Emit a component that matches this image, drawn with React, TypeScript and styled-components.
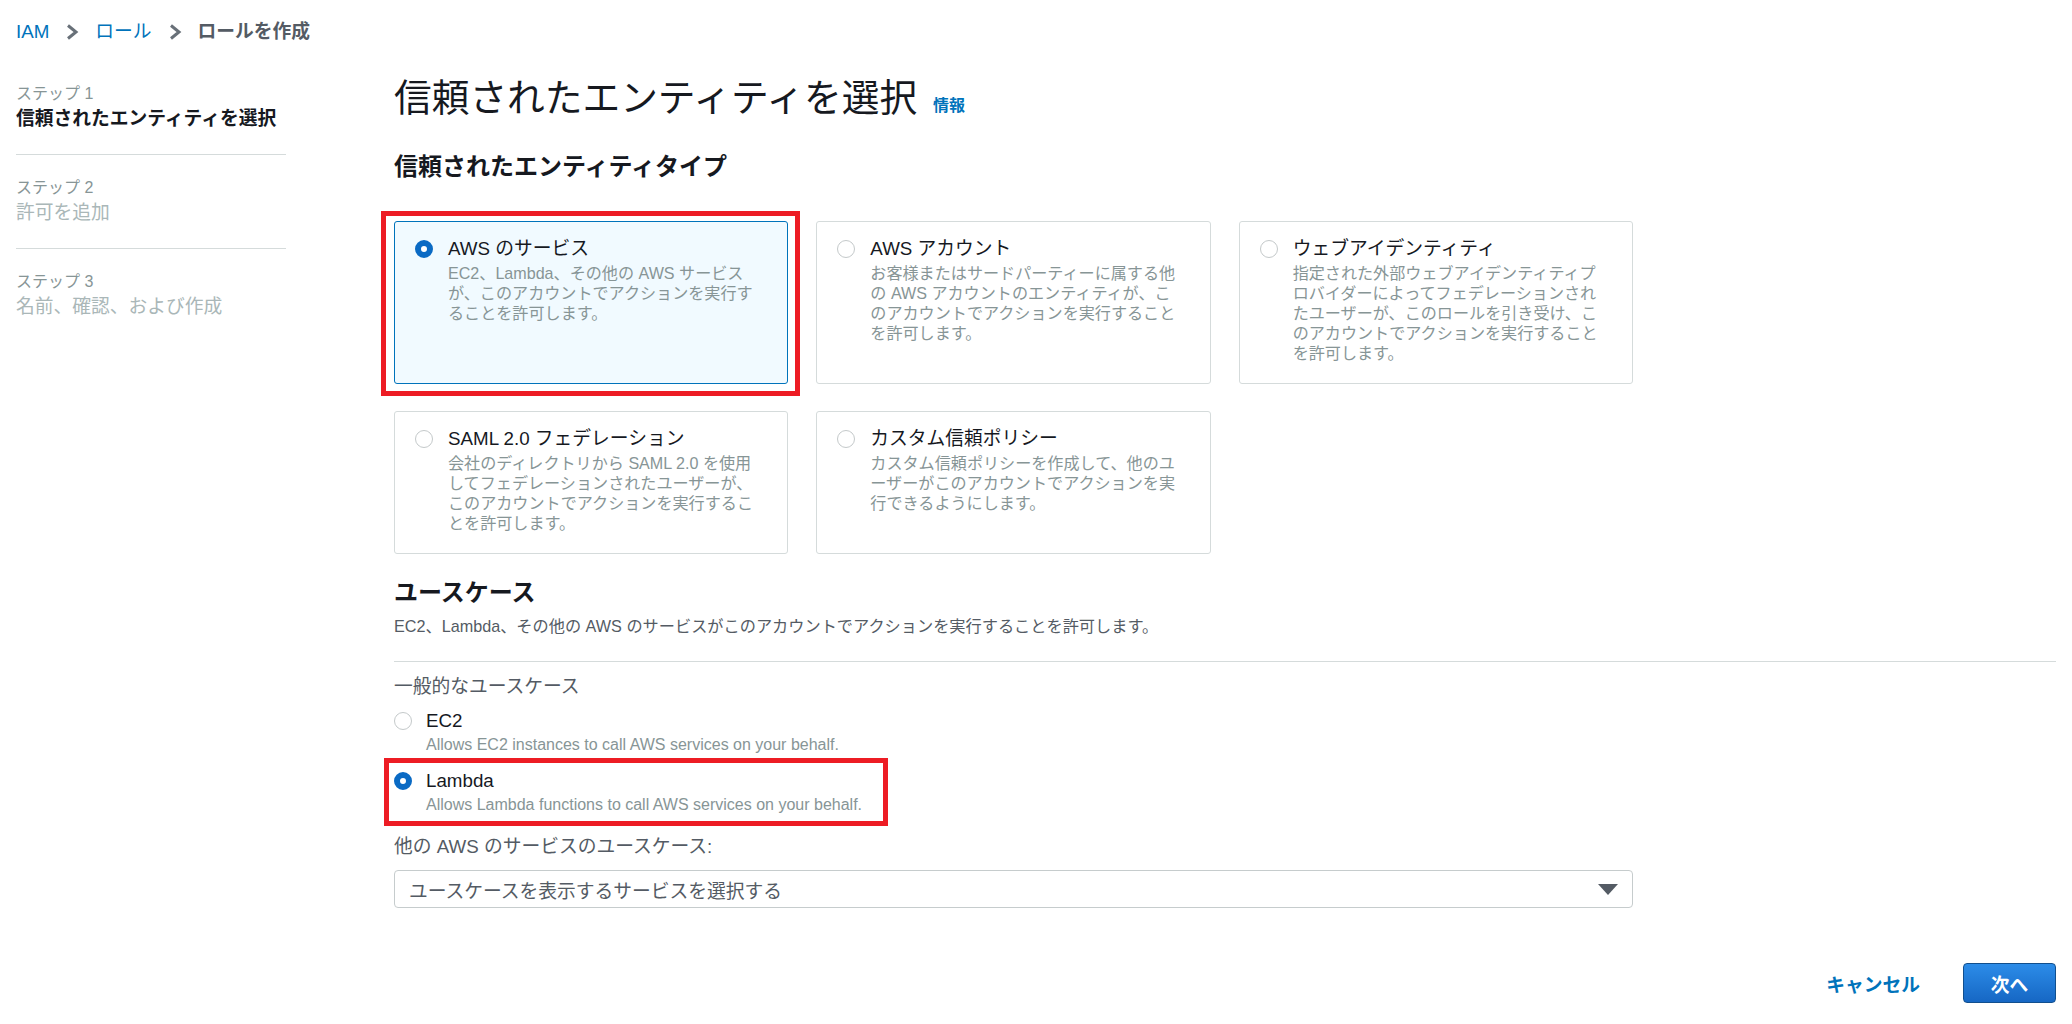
import styled, { createGlobalStyle } from 'styled-components';
import { useState } from 'react';

const GlobalStyle = createGlobalStyle`
  body {
    margin: 0;
    background: #ffffff;
    font-family: 'Liberation Sans', 'Noto Sans CJK JP', sans-serif;
    color: #16191f;
  }
`;

const Page = styled.div`
  padding: 0 16px;
`;

const Breadcrumbs = styled.nav`
  display: flex;
  align-items: center;
  gap: 16px;
  padding-top: 20px;
  height: 24px;
  font-size: 18.75px;
  line-height: 24px;
`;

const Crumb = styled.a<{ current?: boolean }>`
  color: ${props => (props.current ? '#545b64' : '#0073bb')};
  font-weight: ${props => (props.current ? 700 : 400)};
  text-decoration: none;
`;

const Layout = styled.div`
  display: flex;
  align-items: flex-start;
`;

const Sidebar = styled.ol`
  list-style: none;
  margin: 0;
  padding: 39px 0 0;
  width: 270px;
  flex-shrink: 0;
`;

const Step = styled.li`
  padding-bottom: 21px;

  & + & {
    border-top: 1px solid #d5dbdb;
    padding-top: 22px;
  }
`;

const StepLabel = styled.div`
  font-size: 16px;
  line-height: 22px;
  color: #879596;
`;

const StepTitle = styled.div<{ active?: boolean }>`
  font-size: 18.75px;
  line-height: 28px;
  font-weight: ${props => (props.active ? 700 : 400)};
  color: ${props => (props.active ? '#16191f' : '#aab7b8')};
`;

const Main = styled.main`
  flex: 1;
  margin-left: 108px;
  padding-top: 32px;
`;

const TitleRow = styled.div`
  display: flex;
  align-items: baseline;
  gap: 16px;
`;

const PageTitle = styled.h1`
  margin: 0;
  font-size: 37.7px;
  line-height: 44px;
  font-weight: 400;
  color: #16191f;
`;

const InfoLink = styled.a`
  font-size: 16px;
  font-weight: 700;
  color: #0073bb;
  text-decoration: none;
`;

const SectionTitle = styled.h2<{ gap: number }>`
  margin: ${props => props.gap}px 0 0;
  font-size: 24px;
  line-height: 32px;
  font-weight: 700;
  color: #16191f;
`;

const CardGrid = styled.div`
  display: grid;
  grid-template-columns: repeat(3, 1fr);
  column-gap: 28px;
  row-gap: 27px;
  width: 1239px;
  margin-top: 38px;
`;

const Card = styled.label<{ selected?: boolean }>`
  position: relative;
  display: flex;
  gap: 15px;
  padding: 15px 16px 20px 20px;
  border: 1px solid ${props => (props.selected ? '#0073bb' : '#d5dbdb')};
  border-radius: 3px;
  background: ${props => (props.selected ? '#f1faff' : '#ffffff')};
  cursor: pointer;
`;

const Radio = styled.span<{ checked?: boolean }>`
  box-sizing: border-box;
  flex-shrink: 0;
  width: 18px;
  height: 18px;
  margin-top: 3px;
  border-radius: 50%;
  background: #ffffff;
  border: ${props => (props.checked ? '6px solid #0a6ac4' : '1.5px solid #c4c9ca')};
`;

const OptionText = styled.div`
  display: flex;
  flex-direction: column;
`;

const CardTitle = styled.div`
  font-size: 18.75px;
  line-height: 24px;
  color: #16191f;
`;

const CardDesc = styled.div`
  margin-top: 2px;
  font-size: 16.1px;
  line-height: 20px;
  color: #879596;
  white-space: pre-line;
`;

const Highlight = styled.span<{ top: number; left: number; right?: number; bottom: number; width?: number }>`
  box-sizing: border-box;
  position: absolute;
  top: ${props => -props.top}px;
  left: ${props => -props.left}px;
  bottom: ${props => -props.bottom}px;
  ${props => (props.width ? `width: ${props.width}px;` : `right: ${-(props.right ?? 0)}px;`)}
  border: 5px solid #ed1c24;
  pointer-events: none;
`;

const Lead = styled.p`
  margin: 6px 0 0;
  font-size: 16.2px;
  line-height: 22px;
  color: #545b64;
`;

const Divider = styled.hr`
  margin: 24px 0 0;
  border: none;
  border-top: 1px solid #d5dbdb;
`;

const FieldLabel = styled.div<{ gap: number }>`
  margin-top: ${props => props.gap}px;
  font-size: 18.75px;
  line-height: 26px;
  color: #545b64;
`;

const OptionList = styled.div`
  display: flex;
  flex-direction: column;
  gap: 12px;
  margin-top: 8px;
`;

const Option = styled.label`
  position: relative;
  display: flex;
  gap: 14px;
  cursor: pointer;

  ${Radio} {
    margin-top: 4px;
  }
`;

const OptionTitle = styled.div`
  font-size: 18.75px;
  line-height: 26px;
  color: #16191f;
`;

const OptionDesc = styled.div`
  font-size: 16px;
  line-height: 22px;
  color: #879596;
`;

const Select = styled.div`
  box-sizing: border-box;
  display: flex;
  align-items: center;
  justify-content: space-between;
  width: 1239px;
  height: 38px;
  margin-top: 10px;
  padding: 0 14px;
  border: 1px solid #c6cccd;
  border-radius: 4px;
  font-size: 18.75px;
  color: #545b64;
`;

const Footer = styled.div`
  display: flex;
  justify-content: flex-end;
  align-items: center;
  gap: 23px;
  margin-top: 55px;
`;

const LinkButton = styled.button`
  height: 40px;
  padding: 0 20px;
  border: none;
  background: transparent;
  font-family: inherit;
  font-size: 18.75px;
  font-weight: 700;
  color: #0073bb;
  cursor: pointer;
`;

const PrimaryButton = styled.button`
  width: 93px;
  height: 40px;
  border: 1px solid #114f8e;
  border-radius: 4px;
  background: linear-gradient(#2c8ce8, #1667c4);
  font-family: inherit;
  font-size: 18.75px;
  font-weight: 700;
  color: #ffffff;
  cursor: pointer;
`;

const Chevron = () => (
  <svg width="14" height="16" viewBox="0 0 14 16">
    <polyline points="3,1.5 11,8 3,14.5" fill="none" stroke="#687078" strokeWidth="3" />
  </svg>
);

const Caret = () => (
  <svg width="20" height="11" viewBox="0 0 20 11">
    <polygon points="0,0 20,0 10,11" fill="#545b64" />
  </svg>
);

const ENTITY_TYPES = [
  {
    id: 'service',
    title: 'AWS のサービス',
    desc: 'EC2、Lambda、その他の AWS サービス\nが、このアカウントでアクションを実行す\nることを許可します。',
  },
  {
    id: 'account',
    title: 'AWS アカウント',
    desc: 'お客様またはサードパーティーに属する他\nの AWS アカウントのエンティティが、こ\nのアカウントでアクションを実行すること\nを許可します。',
  },
  {
    id: 'web',
    title: 'ウェブアイデンティティ',
    desc: '指定された外部ウェブアイデンティティプ\nロバイダーによってフェデレーションされ\nたユーザーが、このロールを引き受け、こ\nのアカウントでアクションを実行すること\nを許可します。',
  },
  {
    id: 'saml',
    title: 'SAML 2.0 フェデレーション',
    desc: '会社のディレクトリから SAML 2.0 を使用\nしてフェデレーションされたユーザーが、\nこのアカウントでアクションを実行するこ\nとを許可します。',
  },
  {
    id: 'custom',
    title: 'カスタム信頼ポリシー',
    desc: 'カスタム信頼ポリシーを作成して、他のユ\nーザーがこのアカウントでアクションを実\n行できるようにします。',
  },
];

const USE_CASES = [
  { id: 'ec2', title: 'EC2', desc: 'Allows EC2 instances to call AWS services on your behalf.' },
  { id: 'lambda', title: 'Lambda', desc: 'Allows Lambda functions to call AWS services on your behalf.' },
];

const STEPS = [
  { label: 'ステップ 1', title: '信頼されたエンティティを選択' },
  { label: 'ステップ 2', title: '許可を追加' },
  { label: 'ステップ 3', title: '名前、確認、および作成' },
];

export default function App() {
  const [entity, setEntity] = useState('service');
  const [useCase, setUseCase] = useState('lambda');

  return (
    <Page>
      <GlobalStyle />
      <Breadcrumbs>
        <Crumb href="#">IAM</Crumb>
        <Chevron />
        <Crumb href="#">ロール</Crumb>
        <Chevron />
        <Crumb current>ロールを作成</Crumb>
      </Breadcrumbs>
      <Layout>
        <Sidebar>
          {STEPS.map((step, i) => (
            <Step key={step.label}>
              <StepLabel>{step.label}</StepLabel>
              <StepTitle active={i === 0}>{step.title}</StepTitle>
            </Step>
          ))}
        </Sidebar>
        <Main>
          <TitleRow>
            <PageTitle>信頼されたエンティティを選択</PageTitle>
            <InfoLink href="#">情報</InfoLink>
          </TitleRow>
          <SectionTitle gap={31}>信頼されたエンティティタイプ</SectionTitle>
          <CardGrid>
            {ENTITY_TYPES.map(type => (
              <Card key={type.id} selected={entity === type.id} onClick={() => setEntity(type.id)}>
                <Radio checked={entity === type.id} />
                <OptionText>
                  <CardTitle>{type.title}</CardTitle>
                  <CardDesc>{type.desc}</CardDesc>
                </OptionText>
                {type.id === 'service' && <Highlight top={11} left={14} right={13} bottom={13} />}
              </Card>
            ))}
          </CardGrid>
          <SectionTitle gap={23}>ユースケース</SectionTitle>
          <Lead>EC2、Lambda、その他の AWS のサービスがこのアカウントでアクションを実行することを許可します。</Lead>
          <Divider />
          <FieldLabel gap={12}>一般的なユースケース</FieldLabel>
          <OptionList>
            {USE_CASES.map(uc => (
              <Option key={uc.id} onClick={() => setUseCase(uc.id)}>
                <Radio checked={useCase === uc.id} />
                <OptionText>
                  <OptionTitle>{uc.title}</OptionTitle>
                  <OptionDesc>{uc.desc}</OptionDesc>
                </OptionText>
                {uc.id === 'lambda' && <Highlight top={10} left={10} bottom={10} width={504} />}
              </Option>
            ))}
          </OptionList>
          <FieldLabel gap={18}>他の AWS のサービスのユースケース:</FieldLabel>
          <Select>
            <span>ユースケースを表示するサービスを選択する</span>
            <Caret />
          </Select>
          <Footer>
            <LinkButton type="button">キャンセル</LinkButton>
            <PrimaryButton type="button">次へ</PrimaryButton>
          </Footer>
        </Main>
      </Layout>
    </Page>
  );
}
